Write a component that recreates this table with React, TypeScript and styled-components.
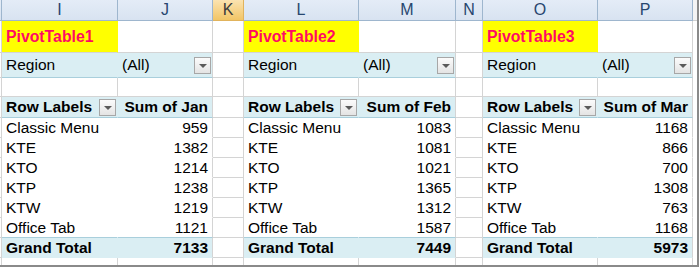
import styled, { createGlobalStyle, css } from "styled-components";

const GlobalStyle = createGlobalStyle`
  html, body {
    margin: 0;
    padding: 0;
    background: #ffffff;
  }
  body {
    font-family: "Liberation Sans", Arial, sans-serif;
  }
`;

type Pivot = {
  title: string;
  valueLabel: string;
  rows: [string, number][];
  total: number;
};

const pivots: Pivot[] = [
  {
    title: "PivotTable1",
    valueLabel: "Sum of Jan",
    rows: [
      ["Classic Menu", 959],
      ["KTE", 1382],
      ["KTO", 1214],
      ["KTP", 1238],
      ["KTW", 1219],
      ["Office Tab", 1121],
    ],
    total: 7133,
  },
  {
    title: "PivotTable2",
    valueLabel: "Sum of Feb",
    rows: [
      ["Classic Menu", 1083],
      ["KTE", 1081],
      ["KTO", 1021],
      ["KTP", 1365],
      ["KTW", 1312],
      ["Office Tab", 1587],
    ],
    total: 7449,
  },
  {
    title: "PivotTable3",
    valueLabel: "Sum of Mar",
    rows: [
      ["Classic Menu", 1168],
      ["KTE", 866],
      ["KTO", 700],
      ["KTP", 1308],
      ["KTW", 763],
      ["Office Tab", 1168],
    ],
    total: 5973,
  },
];

// column letters and their pixel widths (border included)
const columns = [
  { name: "I", width: 116 },
  { name: "J", width: 95 },
  { name: "K", width: 31 },
  { name: "L", width: 115 },
  { name: "M", width: 97 },
  { name: "N", width: 27 },
  { name: "O", width: 115 },
  { name: "P", width: 95 },
];
const labelWidths = [116, 115, 115];
const valueWidths = [95, 97, 95];
const spacerWidths = [31, 27];

const GRID = "#d4d4d4";
const FILL = "#daeef3";
const FILL_LINE = "#a9cfdc";

const Frame = styled.div`
  width: 697px;
  height: 265px;
  overflow: hidden;
  border-right: 2px solid #8a8a8a;
  border-bottom: 2px solid #8a8a8a;
  background: #ffffff;
`;

const Row = styled.div<{ $h: number }>`
  display: flex;
  height: ${(p) => p.$h}px;
`;

const headerBase = css`
  box-sizing: border-box;
  flex: none;
  border-right: 1px solid #9eb6ce;
  border-bottom: 1px solid #9eb6ce;
  background: linear-gradient(#e4ecf7, #d8e3f1);
`;

// sliver of column H that peeks in at the left edge
const HeaderStub = styled.div`
  ${headerBase};
  width: 2px;
`;

const HeaderCell = styled.div<{ $w: number; $active?: boolean }>`
  ${headerBase};
  width: ${(p) => p.$w}px;
  display: flex;
  align-items: center;
  justify-content: center;
  font-size: 16px;
  color: #27466f;
  ${(p) =>
    p.$active &&
    css`
      color: #3b3b3b;
      background: linear-gradient(#fbe3b1, #f2c566);
      border-right-color: #e1b35c;
      border-bottom-color: #e1b35c;
    `}
`;

const HeaderTail = styled.div`
  flex: 1;
  background: #f4f4f4;
  border-bottom: 1px solid #d0d0d0;
`;

type Tone = "plain" | "band" | "bandLine" | "white" | "whiteLine" | "title";

const Stub = styled.div`
  box-sizing: border-box;
  width: 2px;
  flex: none;
  border-right: 1px solid ${GRID};
  border-bottom: 1px solid ${GRID};
`;

const Cell = styled.div<{
  $w: number;
  $tone?: Tone;
  $edge?: boolean;
  $right?: boolean;
  $bold?: boolean;
}>`
  box-sizing: border-box;
  width: ${(p) => p.$w}px;
  flex: none;
  display: flex;
  align-items: center;
  justify-content: ${(p) => (p.$right ? "flex-end" : "space-between")};
  padding: 0 ${(p) => (p.$right ? 4 : 1)}px 0 4px;
  font-size: 15.5px;
  font-weight: ${(p) => (p.$bold ? 700 : 400)};
  color: #000000;
  white-space: nowrap;
  overflow: hidden;
  border-right: 1px solid ${GRID};
  border-bottom: 1px solid ${GRID};
  background: #ffffff;
  ${(p) =>
    p.$tone === "title" &&
    css`
      background: #ffff00;
      color: #ff0a64;
      font-weight: 700;
      padding-left: 4px;
      font-size: 15.8px;
      border-right-color: #ffff00;
      border-bottom-color: ${GRID};
    `}
  ${(p) =>
    (p.$tone === "band" || p.$tone === "bandLine") &&
    css`
      background: ${FILL};
      border-right-color: ${p.$edge ? GRID : FILL};
      border-bottom-color: ${p.$tone === "bandLine" ? FILL_LINE : FILL};
    `}
  ${(p) =>
    (p.$tone === "white" || p.$tone === "whiteLine") &&
    css`
      border-right-color: ${p.$edge ? GRID : "#ffffff"};
      border-bottom-color: ${p.$tone === "whiteLine" ? FILL_LINE : "#ffffff"};
    `}
`;

const Tail = styled.div`
  flex: 1;
  background: #ffffff;
`;

const DropButton = styled.span`
  box-sizing: border-box;
  width: 17px;
  height: 17px;
  flex: none;
  display: flex;
  align-items: center;
  justify-content: center;
  border: 1px solid #a7a7a7;
  background: linear-gradient(#fbfbfb, #e4e4e4);

  &::after {
    content: "";
    width: 0;
    height: 0;
    border-left: 4px solid transparent;
    border-right: 4px solid transparent;
    border-top: 4px solid #5a5a5a;
    margin-top: 1px;
  }
`;

type RowSpec = (i: number, p: Pivot) => [JSX.Element, JSX.Element];

const SheetRow = ({ h, render }: { h: number; render: RowSpec }) => (
  <Row $h={h}>
    <Stub />
    {pivots.map((p, i) => {
      const [a, b] = render(i, p);
      return (
        <span key={p.title} style={{ display: "contents" }}>
          {a}
          {b}
          {i < spacerWidths.length && <Cell $w={spacerWidths[i]} />}
        </span>
      );
    })}
    <Tail />
  </Row>
);

export default function App() {
  return (
    <>
      <GlobalStyle />
      <Frame>
        <Row $h={21}>
          <HeaderStub />
          {columns.map((c) => (
            <HeaderCell key={c.name} $w={c.width} $active={c.name === "K"}>
              {c.name}
            </HeaderCell>
          ))}
          <HeaderTail />
        </Row>

        <SheetRow
          h={32}
          render={(i, p) => [
            <Cell key="a" $w={labelWidths[i]} $tone="title">
              {p.title}
            </Cell>,
            <Cell key="b" $w={valueWidths[i]} />,
          ]}
        />

        <SheetRow
          h={25}
          render={(i) => [
            <Cell key="a" $w={labelWidths[i]} $tone="bandLine">
              Region
            </Cell>,
            <Cell key="b" $w={valueWidths[i]} $tone="bandLine" $edge>
              (All)
              <DropButton />
            </Cell>,
          ]}
        />

        <SheetRow
          h={19}
          render={(i) => [
            <Cell key="a" $w={labelWidths[i]} />,
            <Cell key="b" $w={valueWidths[i]} />,
          ]}
        />

        <SheetRow
          h={21}
          render={(i, p) => [
            <Cell key="a" $w={labelWidths[i]} $tone="bandLine" $bold>
              Row Labels
              <DropButton />
            </Cell>,
            <Cell key="b" $w={valueWidths[i]} $tone="bandLine" $edge $right $bold>
              {p.valueLabel}
            </Cell>,
          ]}
        />

        {pivots[0].rows.map((_, r) => (
          <SheetRow
            key={r}
            h={20}
            render={(i, p) => {
              const tone: Tone = r === p.rows.length - 1 ? "whiteLine" : "white";
              return [
                <Cell key="a" $w={labelWidths[i]} $tone={tone}>
                  {p.rows[r][0]}
                </Cell>,
                <Cell key="b" $w={valueWidths[i]} $tone={tone} $edge $right>
                  {p.rows[r][1]}
                </Cell>,
              ];
            }}
          />
        ))}

        <SheetRow
          h={20}
          render={(i, p) => [
            <Cell key="a" $w={labelWidths[i]} $tone="band" $bold>
              Grand Total
            </Cell>,
            <Cell key="b" $w={valueWidths[i]} $tone="band" $edge $right $bold>
              {p.total}
            </Cell>,
          ]}
        />

        <SheetRow
          h={20}
          render={(i) => [
            <Cell key="a" $w={labelWidths[i]} />,
            <Cell key="b" $w={valueWidths[i]} />,
          ]}
        />
      </Frame>
    </>
  );
}
